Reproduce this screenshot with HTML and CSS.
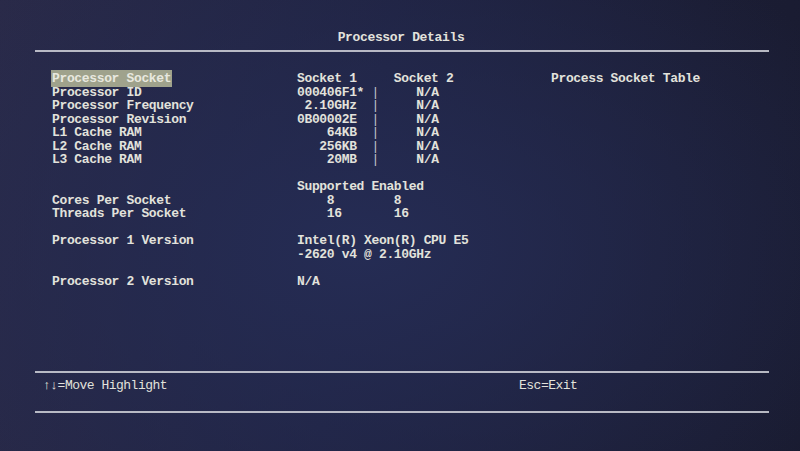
FILE: index.html
```html
<!doctype html>
<html lang="en">
<head>
<meta charset="utf-8">
<title>Processor Details</title>
<link rel="stylesheet" href="styles.css">
</head>
<body>
<div class="screen">
  <h1 class="title">Processor Details</h1>
  <div class="rule"></div>

  <div class="panel">
    <div class="row">
      <span class="label"><span class="hl">Processor Socket</span></span>
      <span class="val">Socket 1     Socket 2</span>
      <span class="side">Process Socket Table</span>
    </div>
    <div class="row"><span class="label">Processor ID</span><span class="val">000406F1* <i>|</i>     N/A</span></div>
    <div class="row"><span class="label">Processor Frequency</span><span class="val"> 2.10GHz  <i>|</i>     N/A</span></div>
    <div class="row"><span class="label">Processor Revision</span><span class="val">0B00002E  <i>|</i>     N/A</span></div>
    <div class="row"><span class="label">L1 Cache RAM</span><span class="val">    64KB  <i>|</i>     N/A</span></div>
    <div class="row"><span class="label">L2 Cache RAM</span><span class="val">   256KB  <i>|</i>     N/A</span></div>
    <div class="row"><span class="label">L3 Cache RAM</span><span class="val">    20MB  <i>|</i>     N/A</span></div>
    <div class="row blank"></div>
    <div class="row"><span class="label"></span><span class="val">Supported Enabled</span></div>
    <div class="row"><span class="label">Cores Per Socket</span><span class="val">    8        8</span></div>
    <div class="row"><span class="label">Threads Per Socket</span><span class="val">    16       16</span></div>
    <div class="row blank"></div>
    <div class="row"><span class="label">Processor 1 Version</span><span class="val">Intel(R) Xeon(R) CPU E5</span></div>
    <div class="row"><span class="label"></span><span class="val">-2620 v4 @ 2.10GHz</span></div>
    <div class="row blank"></div>
    <div class="row"><span class="label">Processor 2 Version</span><span class="val">N/A</span></div>
  </div>

  <div class="rule bottom"></div>
  <div class="keys">
    <span class="key-move">↑↓=Move Highlight</span>
    <span>Esc=Exit</span>
  </div>
  <div class="rule"></div>
</div>
</body>
</html>
```

FILE: styles.css
```css
:root{
  --text:#e2e2dc;--line:#c9cad3;--hl:#9fa28c;--lh:13.5px
}
*{box-sizing:border-box;margin:0;padding:0}
html,body{width:800px;height:451px;overflow:hidden}
body{
  background:
    radial-gradient(ellipse 70% 80% at 45% 55%,#252c54 0%,rgba(37,44,84,0) 100%),
    linear-gradient(100deg,#2a2a48 0%,#1f2240 45%,#1b1d34 80%,#191b30 100%);
  color:var(--text);
  font-family:"Liberation Mono","DejaVu Sans Mono",monospace;
  font-size:13px;font-weight:bold;letter-spacing:-.35px;
  line-height:var(--lh)
}
.screen{padding-top:31px}
.title{font-size:13px;font-weight:bold;text-align:center;padding-left:2px;line-height:var(--lh)}
.rule{margin:5px 0 0 35px;width:734px;height:2px;background:var(--line);opacity:.9}
.panel{margin-top:20.5px;padding-left:52px;height:300px}
.row{display:flex;height:var(--lh);white-space:pre}
.label{width:245px;flex:none}
.hl{background:var(--hl);color:#e8e8df;margin-left:-1px;padding:1px}
.val{width:254px;flex:none}
.val i{font-style:normal;font-weight:normal;color:#c4c5cc}
.rule.bottom{margin-top:-1px}
.keys{display:flex;padding-left:43px;margin-top:6px;height:32px;font-weight:normal;letter-spacing:-.5px}
.keys .key-move{width:476px}
.keys + .rule{margin-top:0}
```
